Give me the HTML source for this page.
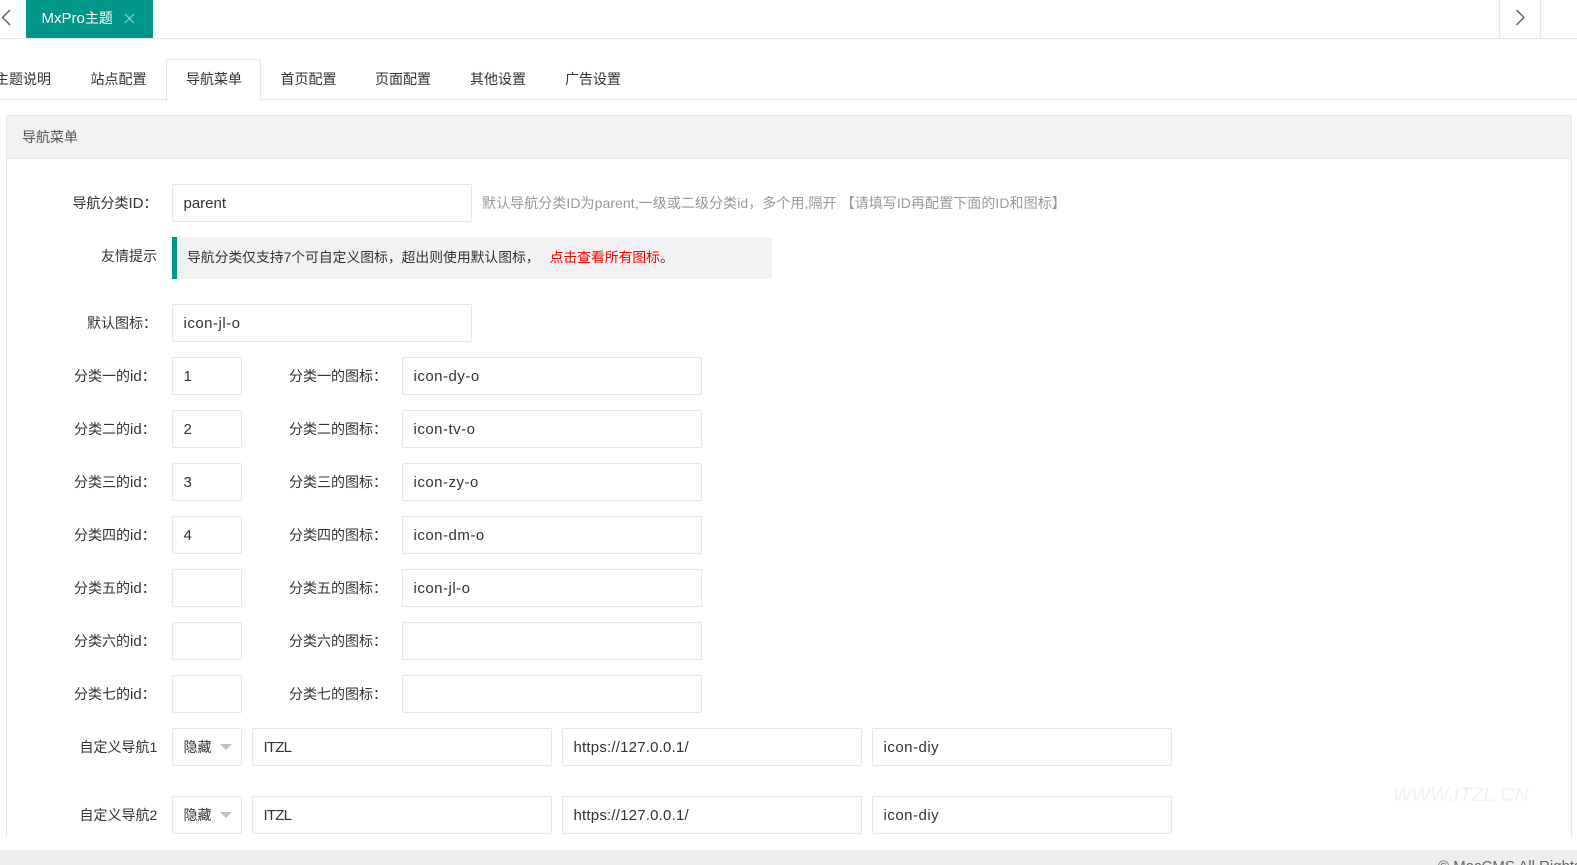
<!DOCTYPE html>
<html lang="zh-CN">
<head>
<meta charset="utf-8">
<title>MxPro主题</title>
<style>
html,body{margin:0;padding:0;background:#fff;}
body{width:1577px;height:865px;overflow:hidden;position:relative;font-family:"Liberation Sans","Noto Sans CJK SC",sans-serif;font-size:14px;color:#333;}
.a{position:absolute;white-space:nowrap;}
.l{position:absolute;white-space:nowrap;height:20px;line-height:20px;color:#333;font-size:14px;}
.l b{font-weight:normal;font-size:15px;}
.i{position:absolute;box-sizing:border-box;height:38px;line-height:38px;border:1px solid #e6e6e6;border-radius:2px;background:#fff;padding-left:10.500px;color:#333;font-size:15px;white-space:nowrap;}
.ic{letter-spacing:0.500px;}
.u{letter-spacing:0.200px;}
.z{letter-spacing:-0.800px;}
.t{position:absolute;top:69px;height:20px;line-height:20px;color:#333;white-space:nowrap;font-size:14px;}
</style>
</head>
<body>
<!-- top tab bar -->
<div class="a" style="left:0;top:38px;width:1577px;height:1px;background:#e6e6e6"></div>
<svg class="a" style="left:0;top:8px" width="14" height="20" viewBox="0 0 14 20"><path d="M10 2 L2.500 9.500 L10 17" fill="none" stroke="#666" stroke-width="1.500"/></svg>
<div class="a" style="left:26px;top:0;width:127px;height:38px;background:#009688"></div>
<div class="a" style="left:41.500px;top:8px;height:20px;line-height:20px;color:#fff;font-size:14px"><span style="font-size:15px">MxPro</span>主题</div>
<svg class="a" style="left:124px;top:13px" width="11" height="11" viewBox="0 0 11 11"><path d="M1 1 L10 10 M10 1 L1 10" fill="none" stroke="#9fd5cf" stroke-width="1"/></svg>
<div class="a" style="left:1499px;top:0;width:1px;height:38px;background:#e6e6e6"></div>
<div class="a" style="left:1540px;top:0;width:1px;height:38px;background:#e6e6e6"></div>
<svg class="a" style="left:1514px;top:8px" width="14" height="20" viewBox="0 0 14 20"><path d="M2.500 2 L10 9.500 L2.500 17" fill="none" stroke="#666" stroke-width="1.500"/></svg>

<!-- tabs -->
<div class="a" style="left:0;top:99px;width:1577px;height:1px;background:#e6e6e6"></div>
<div class="a" style="left:166px;top:59px;width:95px;height:42px;box-sizing:border-box;border:1px solid #e6e6e6;border-bottom:0;border-radius:2px 2px 0 0;background:#fff"></div>
<div class="t" style="left:-5px">主题说明</div>
<div class="t" style="left:90.500px">站点配置</div>
<div class="t" style="left:186px">导航菜单</div>
<div class="t" style="left:280.500px">首页配置</div>
<div class="t" style="left:375px">页面配置</div>
<div class="t" style="left:470px">其他设置</div>
<div class="t" style="left:565px">广告设置</div>

<!-- panel -->
<div class="a" style="left:6px;top:115px;width:1566px;height:722px;box-sizing:border-box;border:1px solid #e6e6e6;border-bottom:0;border-radius:2px 2px 0 0"></div>
<div class="a" style="left:7px;top:116px;width:1564px;height:42px;background:#f2f2f2;border-bottom:1px solid #e6e6e6"></div>
<div class="a" style="left:22px;top:127px;height:20px;line-height:20px;color:#555">导航菜单</div>

<!-- nav id -->
<div class="l" style="left:72.500px;top:193px">导航分类<b>ID</b>：</div>
<div class="i" style="left:172px;top:184px;width:300px">parent</div>
<div class="a" style="left:482px;top:193px;height:20px;line-height:20px;color:#999;font-size:14px;letter-spacing:0.070px">默认导航分类ID为parent,一级或二级分类id，多个用,隔开 【请填写ID再配置下面的ID和图标】</div>

<!-- tip -->
<div class="l" style="left:101px;top:246px">友情提示</div>
<div class="a" style="left:172px;top:237px;width:600px;height:42px;background:#f2f2f2;box-sizing:border-box;border-left:5px solid #009688"></div>
<div class="a" style="left:187px;top:248px;height:20px;line-height:20px;color:#333;font-size:13.800px">导航分类仅支持7个可自定义图标，超出则使用默认图标，<span style="color:#f00;margin-left:10px">点击查看所有图标</span>。</div>

<!-- default icon -->
<div class="l" style="left:87px;top:313px">默认图标：</div>
<div class="i ic" style="left:172px;top:304px;width:300px">icon-jl-o</div>

<!-- rows -->
<div class="l" style="left:74px;top:366px">分类一的<b>id</b>：</div>
<div class="i" style="left:172px;top:357px;width:70px">1</div>
<div class="l" style="left:289px;top:366px">分类一的图标：</div>
<div class="i ic" style="left:402px;top:357px;width:300px">icon-dy-o</div>

<div class="l" style="left:74px;top:419px">分类二的<b>id</b>：</div>
<div class="i" style="left:172px;top:410px;width:70px">2</div>
<div class="l" style="left:289px;top:419px">分类二的图标：</div>
<div class="i ic" style="left:402px;top:410px;width:300px">icon-tv-o</div>

<div class="l" style="left:74px;top:472px">分类三的<b>id</b>：</div>
<div class="i" style="left:172px;top:463px;width:70px">3</div>
<div class="l" style="left:289px;top:472px">分类三的图标：</div>
<div class="i ic" style="left:402px;top:463px;width:300px">icon-zy-o</div>

<div class="l" style="left:74px;top:525px">分类四的<b>id</b>：</div>
<div class="i" style="left:172px;top:516px;width:70px">4</div>
<div class="l" style="left:289px;top:525px">分类四的图标：</div>
<div class="i ic" style="left:402px;top:516px;width:300px">icon-dm-o</div>

<div class="l" style="left:74px;top:578px">分类五的<b>id</b>：</div>
<div class="i" style="left:172px;top:569px;width:70px"></div>
<div class="l" style="left:289px;top:578px">分类五的图标：</div>
<div class="i ic" style="left:402px;top:569px;width:300px">icon-jl-o</div>

<div class="l" style="left:74px;top:631px">分类六的<b>id</b>：</div>
<div class="i" style="left:172px;top:622px;width:70px"></div>
<div class="l" style="left:289px;top:631px">分类六的图标：</div>
<div class="i" style="left:402px;top:622px;width:300px"></div>

<div class="l" style="left:74px;top:684px">分类七的<b>id</b>：</div>
<div class="i" style="left:172px;top:675px;width:70px"></div>
<div class="l" style="left:289px;top:684px">分类七的图标：</div>
<div class="i" style="left:402px;top:675px;width:300px"></div>

<!-- custom nav 1 -->
<div class="l" style="left:79.500px;top:737px">自定义导航1</div>
<div class="i" style="left:172px;top:728px;width:70px;font-size:14px;line-height:36px">隐藏</div>
<div class="a" style="left:220px;top:744px;width:0;height:0;border-style:solid;border-width:6px 6px 0 6px;border-color:#c2c2c2 transparent transparent transparent"></div>
<div class="i z" style="left:252px;top:728px;width:300px">ITZL</div>
<div class="i u" style="left:562px;top:728px;width:300px">https://127.0.0.1/</div>
<div class="i ic" style="left:872px;top:728px;width:300px">icon-diy</div>

<!-- custom nav 2 -->
<div class="l" style="left:79.500px;top:805px">自定义导航2</div>
<div class="i" style="left:172px;top:796px;width:70px;font-size:14px;line-height:36px">隐藏</div>
<div class="a" style="left:220px;top:812px;width:0;height:0;border-style:solid;border-width:6px 6px 0 6px;border-color:#c2c2c2 transparent transparent transparent"></div>
<div class="i z" style="left:252px;top:796px;width:300px">ITZL</div>
<div class="i u" style="left:562px;top:796px;width:300px">https://127.0.0.1/</div>
<div class="i ic" style="left:872px;top:796px;width:300px">icon-diy</div>

<!-- watermark -->
<div class="a" style="left:1393px;top:783px;height:24px;line-height:24px;font-size:19.500px;font-style:italic;color:#f0f0f0;letter-spacing:0.200px">WWW.ITZL.CN</div>

<!-- footer -->
<div class="a" style="left:0;top:850px;width:1577px;height:15px;background:#eee;overflow:hidden">
  <div class="a" style="left:1438px;top:7px;height:20px;line-height:20px;color:#666;font-size:15px">© MacCMS All Rights Reserved.</div>
</div>
</body>
</html>
